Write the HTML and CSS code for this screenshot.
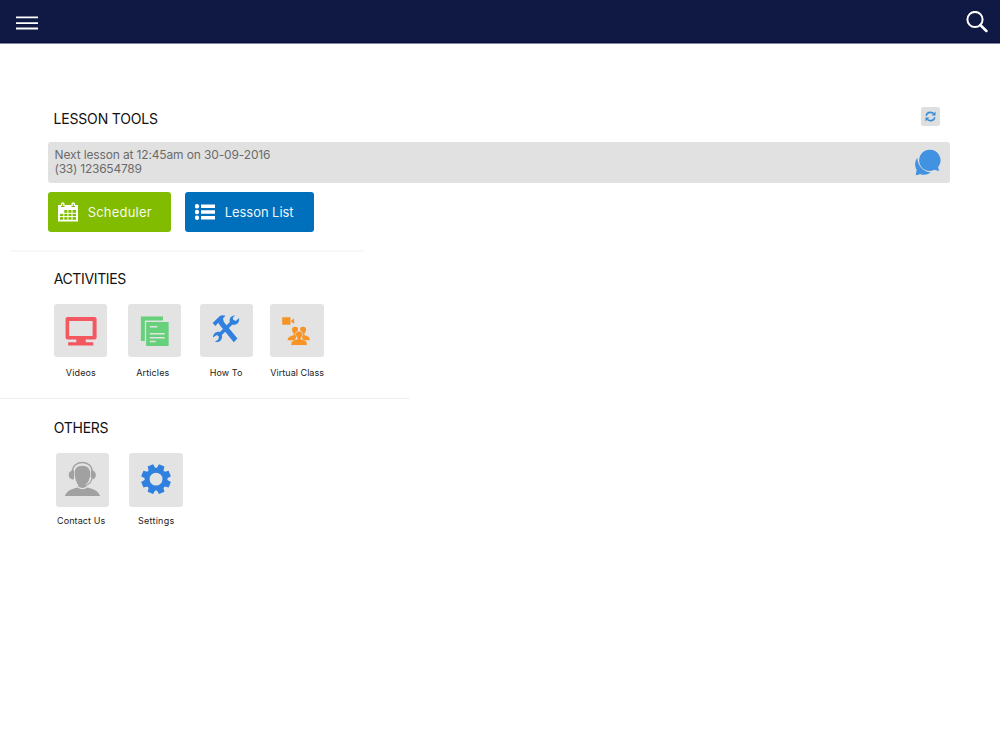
FILE: index.html
```
<!DOCTYPE html>
<html lang="en">
<head>
<meta charset="utf-8">
<title>Lesson Tools</title>
<link rel="stylesheet" href="styles.css">
</head>
<body>
<header class="topbar">
  <svg class="menu" viewBox="0 0 22 14"><path d="M0 1.400H22M0 7.100H22M0 12.500H22" stroke="#fff" stroke-width="1.800"/></svg>
  <svg class="search" viewBox="0 0 22 22"><circle cx="9" cy="8.500" r="7.600" fill="none" stroke="#fff" stroke-width="2"/><path d="M14.300 14L20.400 20" stroke="#fff" stroke-width="2.500" stroke-linecap="round"/></svg>
</header>
<main>
  <section class="lessons">
    <div class="heading-row">
      <h2 class="t-lessons">LESSON TOOLS</h2>
      <button class="refresh" aria-label="Refresh">
        <svg viewBox="0 0 12 12" fill="none" stroke="#3a8fd6" stroke-width="1.700"><path d="M1.300 5.200C1.700 3 3.700 1.500 5.900 1.500C7.300 1.500 8.600 2 9.500 3.100M10.700 6.800C10.200 9 8.300 10.500 6.100 10.500C4.700 10.500 3.400 10 2.500 8.900"/><path d="M11.500 .5V4.900H7.100ZM.5 11.500V7.100H4.900Z" fill="#3a8fd6" stroke="none"/></svg>
      </button>
    </div>
    <div class="notice">
      <p><span class="n1">Next lesson at 12:45am on 30-09-2016</span><br><span class="n2">(33) 123654789</span></p>
      <svg class="chat" viewBox="104 160 78 80"><path fill="#4192e0" d="M111 187C103 196 102 211 109 222L106 239Q115 238 119 235C131 240 145 237 151 230C130 229 112 211 111 187Z"/><path fill="#4192e0" d="M148 162A32 32 0 1 0 163 222.500Q169 226 177 226Q174 220 173.500 214A32 32 0 0 0 148 162Z"/></svg>
    </div>
    <div class="buttons">
      <a class="btn green"><svg viewBox="0 0 20 20"><path fill="#fff" fill-rule="evenodd" d="M0 3H3V5H6.500V3H13.500V5H17V3H20V19.600H0ZM2 8V17.800H18V8Z"/><path fill="none" stroke="#fff" stroke-width="1.300" d="M3.600 4V1.600Q4.700 .3 5.900 1.600V4M14.100 4V1.600Q15.300 .3 16.400 1.600V4"/><path stroke="#fff" stroke-width="1" d="M5.800 8V18M9.900 8V18M14 8V18M2 11.300H18M2 14.600H18"/><path fill="#fff" d="M2 8H5.800V11.300H2Z"/></svg><span class="b1">Scheduler</span></a>
      <a class="btn blue"><svg viewBox="0 0 20 20"><g fill="#fff"><circle cx="2" cy="4.300" r="2.200"/><circle cx="2" cy="10" r="2.200"/><circle cx="2" cy="15.700" r="2.200"/><path d="M6 2.500H20V6H6ZM6 8.200H20V11.700H6ZM6 13.900H20V17.400H6Z"/></g></svg><span class="b2">Lesson List</span></a>
    </div>
  </section>
  <section class="group activities">
    <h2 class="t-activities">ACTIVITIES</h2>
    <div class="tiles">
      <figure class="tile">
        <svg viewBox="0 0 54 54"><path fill="#f3575f" fill-rule="evenodd" d="M13.700 13.200H41A2 2 0 0 1 43 15.200V33.800A2 2 0 0 1 41 35.800H32V38.500H39.700V41.800H14.300V38.500H22.500V35.800H13.700A2 2 0 0 1 11.700 33.800V15.200A2 2 0 0 1 13.700 13.200ZM15.300 17.200V32.200H39V17.200Z"/></svg>
        <figcaption class="c1">Videos</figcaption>
      </figure>
      <figure class="tile">
        <svg viewBox="0 0 54 54"><path fill="#66d07b" d="M13 12.700H35.300V16.700H17V37.400H13ZM18.300 18.100H41V42.400H18.300Z"/><path stroke="#e3e3e3" stroke-width="1.500" d="M22 22.900H29.700M22 30.100H37M22 34H37M22 37.900H28"/></svg>
        <figcaption class="c2">Articles</figcaption>
      </figure>
      <figure class="tile">
        <svg viewBox="0 0 54 54"><g transform="translate(4.800 4.200) scale(.3333)" fill="#3080df"><path d="M24 45L44 25Q52 19 63 23L55 31L58 42L99 92L88 103L47 53L41 44L32 54Z"/><path d="M92 22C80 21 73 31 76 42L46 72C37 69 25 75 25 89L36 81L43 86L41 95L31 102C45 105 55 95 52 81L83 50C96 53 106 44 104 30L94 39L86 35L85 28Z"/></g></svg>
        <figcaption class="c3">How To</figcaption>
      </figure>
      <figure class="tile">
        <svg viewBox="0 0 54 54"><g transform="translate(5 4.300) scale(.3333)" fill="#f79425"><path d="M22 27H47V50H22ZM49 38L58 30V47L49 41Z"/><path d="M61 56C52 56 50 63 53 70Q55 74 57 76V81L44 86Q38 89 38 97H62L64 85L62 74L69 68C71 61 69 56 61 56Z"/><path d="M85 56C94 56 96 63 93 70Q91 74 89 76V81L99 85Q106 88 106 97H84L82 85L84 74L77 68C75 61 77 56 85 56Z"/><path stroke="#e3e3e3" stroke-width="2.500" paint-order="stroke" d="M73 70C63 70 62 78 65 85Q67 89 69 91V94L56 98Q49 101 49 111H97Q97 101 90 98L77 94V91Q79 89 81 85C84 78 83 70 73 70Z"/></g></svg>
        <figcaption class="c4">Virtual Class</figcaption>
      </figure>
    </div>
  </section>
  <section class="group others">
    <h2 class="t-others">OTHERS</h2>
    <div class="tiles">
      <figure class="tile">
        <svg viewBox="0 0 54 54"><g transform="translate(-15.800 -42.500) scale(.3333)"><g fill="#a1a1a1"><path d="M127 166C110 166 103 175 104 193C105 207 110 219 115 225V230Q127 237 140 230V225C145 219 150 207 151 193C152 175 143 166 127 166Z"/><path d="M112 232Q127 243 143 232Q176 239 181 258H74Q79 239 112 232Z"/><path d="M102 180V207C93 209 86 203 86 194S93 180 102 180ZM153 180V207C162 209 168 203 168 194S162 180 153 180Z"/></g><path fill="none" stroke="#a1a1a1" stroke-width="4" d="M97 184C97 147 157 147 157 184"/><path fill="none" stroke="#e3e3e3" stroke-width="8" d="M154 204Q150 221 138 225"/><path fill="none" stroke="#a1a1a1" stroke-width="3.500" d="M156 206Q151 223 138 225"/></g></svg>
        <figcaption class="c5">Contact Us</figcaption>
      </figure>
      <figure class="tile">
        <svg viewBox="0 0 54 54"><g transform="translate(27.300 26.400) scale(.3333)"><circle r="27" fill="none" stroke="#3080df" stroke-width="15"/><g fill="#3080df" transform="rotate(22.500)"><path id="tooth" d="M-11 -30L-9 -45H9L11 -30ZM-11 30L-9 45H9L11 30Z"/><use href="#tooth" transform="rotate(45)"/><use href="#tooth" transform="rotate(90)"/><use href="#tooth" transform="rotate(135)"/></g></g></svg>
        <figcaption class="c6">Settings</figcaption>
      </figure>
    </div>
  </section>
</main>
</body>
</html>
```
FILE: styles.css
```
* { box-sizing: border-box; }
body { margin: 0; background: #fff; color: #111; font-family: Inter, "Liberation Sans", sans-serif; }
svg { display: block; }
h2, p, figure { margin: 0; }
.topbar { height: 44px; background: #101943; display: flex; justify-content: space-between; align-items: flex-start; padding: 10px 12px 0 16px; border-bottom: 1px solid #8388aa; box-shadow: inset 0 -1px #090f38; }
.menu { width: 22px; height: 14px; margin-top: 6px; }
.search { width: 22px; height: 22px; margin-top: .6px; }
.lessons { padding: 63px 50px 0 48px; height: 206px; }
.heading-row { display: flex; justify-content: space-between; align-items: flex-start; padding: 0 10px 0 5.500px; height: 34.800px; }
h2 { font-size: 14px; font-weight: 400; line-height: 20px; white-space: nowrap; }
.t-lessons { margin-top: 2px; letter-spacing: -.17px; }
.t-activities { letter-spacing: -.36px; }
.t-others { letter-spacing: -.25px; }
.refresh { width: 19px; height: 19px; padding: 0; border: 0; border-radius: 2.500px; background: #dfdfdf; display: grid; place-items: center; }
.refresh svg { width: 11px; height: 11px; }
.notice { height: 41px; background: #e1e1e1; border-radius: 3px; color: #6b6b6b; display: flex; justify-content: space-between; padding: 6.300px 9.500px 0 6.500px; }
.notice p { font-size: 12px; line-height: 14px; white-space: nowrap; }
.n1 { letter-spacing: -.14px; }
.n2 { letter-spacing: -.24px; }
.chat { width: 26px; height: 26.700px; margin-top: .6px; }
.buttons { display: flex; gap: 14px; margin-top: 9.700px; }
.btn { height: 40px; width: 123px; border-radius: 3px; display: flex; align-items: center; gap: 10px; padding-left: 9.700px; color: #fff; font-size: 13px; white-space: nowrap; }
.btn svg { width: 20px; height: 20px; }
.btn span { opacity: .93; }
.b1 { letter-spacing: .2px; }
.b2 { letter-spacing: -.05px; }
.green { background: #82bc00; }
.blue { background: #0070bd; width: 128.500px; }
.group { border-top: 1px solid #efefef; }
.activities { border-top: 2px solid #f7f7f7; width: 353px; margin-left: 11px; height: 148px; padding: 17px 0 0 42.700px; }
.others { width: 410px; padding: 19px 0 0 53.700px; }
.tiles { display: flex; margin-top: 14.800px; }
.activities .tiles { gap: 18.400px; }
.others .tiles { gap: 20px; padding-left: 2.300px; margin-top: 15px; }
.tile { width: 53.500px; }
.tile svg { width: 53.500px; height: 53.500px; background: #e3e3e3; border-radius: 3px; }
.activities .tile:nth-child(1) { margin-right: 2px; }
.activities .tile:nth-child(2) { margin-right: .4px; }
.activities .tile:nth-child(3) { margin-right: -1.700px; }
figcaption { font-size: 9px; line-height: 12px; margin-top: 9.500px; color: #222; white-space: nowrap; display: flex; justify-content: center; }
.others figcaption { margin-top: 8.800px; }
.c1 { letter-spacing: .15px; margin-left: 1px; }
.c2 { letter-spacing: .12px; margin-right: 3px; }
.c3 { letter-spacing: .1px; margin-right: 1px; }
.c4 { letter-spacing: .04px; margin-left: .7px; }
.c5 { letter-spacing: .1px; margin-right: 3px; }
.c6 { letter-spacing: .25px; }
```
